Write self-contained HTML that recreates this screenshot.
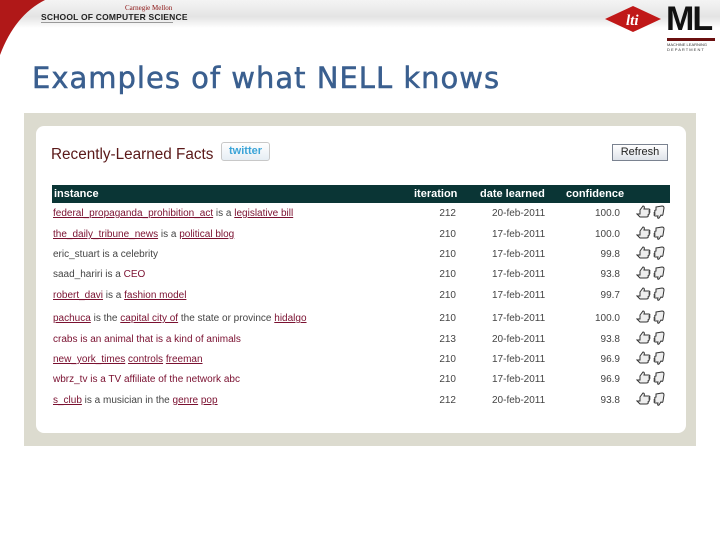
<!DOCTYPE html>
<html><head><meta charset="utf-8"><style>
*{margin:0;padding:0;box-sizing:border-box}
body{width:720px;height:540px;background:#fff;position:relative;overflow:hidden;font-family:"Liberation Sans",sans-serif}
.a{position:absolute}
.hdr{left:0;top:0;width:720px;height:28px;background:linear-gradient(180deg,#f4f4f4,#e4e4e4 60%,#fff)}
.title{left:32px;top:61px;font-family:"DejaVu Sans",sans-serif;font-size:29px;color:#3a5f8f;letter-spacing:1px;-webkit-text-stroke:0.5px #3a5f8f}
.outer{left:24px;top:113px;width:672px;height:333px;background:#dcdbcf}
.inner{left:36px;top:126px;width:650px;height:307px;background:#fff;border-radius:8px}
.h1{left:51px;top:146px;font-size:15.3px;color:#5a1818}
.tw{left:221px;top:142px;width:49px;height:19px;border:1px solid #c8c8c8;border-radius:3px;background:linear-gradient(#fff,#e6eef4);color:#3aa4d8;font-weight:bold;font-size:11px;text-align:center;line-height:17px}
.rf{left:612px;top:144px;width:56px;height:17px;border:1px solid #7a8290;background:linear-gradient(#fff,#dfe3ea);font-size:11px;text-align:center;line-height:15px;color:#222}
.th{left:52px;top:185px;width:618px;height:18px;background:#0a3535;color:#fff;font-size:11px;font-weight:bold}
.th span{position:absolute;top:3px}
.row{left:52px;width:618px;height:14px;font-size:10px;color:#444}
.row span{position:absolute;top:0}
a{color:#7a1030;text-decoration:underline}
.k{color:#7a1030}
.ic{left:584px!important;top:-3px!important}
</style></head><body>
<div class="a hdr"></div>
<svg width="0" height="0" style="position:absolute"><defs>
<g id="ic"><path d="M1,9 h3 v-4 l3,-4 q2,0 1,3 h5 q2,1 0,2 q2,1 0,2 q1,1 -1,2 q1,2 -2,2 h-6 z" fill="#eee" stroke="#333" stroke-width="1"/><path d="M20,2 l6,-1 q2,0 2,2 l-1,6 q0,2 -2,1 l-2,3 q-2,1 -1,-2 l-3,0 q-2,-1 0,-2 q-2,-1 0,-2 q-1,-2 1,-2 z" fill="#eee" stroke="#333" stroke-width="1"/></g>
</defs></svg>
<svg class="a" style="left:0;top:0" width="60" height="60"><path d="M0,0 H45 Q15,15 0,55 Z" fill="#b01818"/></svg>
<div class="a" style="left:125px;top:4px;font-family:'Liberation Serif',serif;font-size:7px;color:#8a1010">Carnegie Mellon</div>
<div class="a" style="left:41px;top:12px;font-size:8.5px;font-weight:bold;color:#222;letter-spacing:.2px">SCHOOL OF COMPUTER SCIENCE</div>
<div class="a" style="left:41px;top:22px;width:132px;height:1px;background:#999"></div>
<svg class="a" style="left:603px;top:4px" width="60" height="30"><path d="M2,15 L30,2 L58,15 L30,28 Z" fill="#c01818"/><text x="23" y="21" font-family="Liberation Serif" font-style="italic" font-weight="bold" font-size="15" fill="#fff">lti</text></svg>
<div class="a" style="left:666px;top:0;font-size:34px;font-weight:bold;color:#111;letter-spacing:-2px;line-height:38px">ML</div>
<div class="a" style="left:667px;top:38px;width:48px;height:3px;background:#6a1010"></div>
<div class="a" style="left:667px;top:42px;font-size:4px;color:#333;line-height:5px">MACHINE LEARNING<br>D E P A R T M E N T</div>
<div class="a title">Examples of what NELL knows</div>
<div class="a outer"></div>
<div class="a inner"></div>
<div class="a h1">Recently-Learned Facts</div>
<div class="a tw">twitter</div>
<div class="a rf">Refresh</div>
<div class="a th"><span style="left:2px">instance</span><span style="left:362px">iteration</span><span style="left:428px">date learned</span><span style="left:514px">confidence</span></div>
<div class="a row" style="top:208px"><span style="left:1px"><a>federal_propaganda_prohibition_act</a> is a <a>legislative bill</a></span><span style="right:214px">212</span><span style="left:440px">20-feb-2011</span><span style="right:50px">100.0</span><svg class="a ic" width="32" height="16"><use href="#ic"/></svg></div>
<div class="a row" style="top:229px"><span style="left:1px"><a>the_daily_tribune_news</a> is a <a>political blog</a></span><span style="right:214px">210</span><span style="left:440px">17-feb-2011</span><span style="right:50px">100.0</span><svg class="a ic" width="32" height="16"><use href="#ic"/></svg></div>
<div class="a row" style="top:249px"><span style="left:1px">eric_stuart is a celebrity</span><span style="right:214px">210</span><span style="left:440px">17-feb-2011</span><span style="right:50px">99.8</span><svg class="a ic" width="32" height="16"><use href="#ic"/></svg></div>
<div class="a row" style="top:269px"><span style="left:1px">saad_hariri is a <span class="k" style="position:static">CEO</span></span><span style="right:214px">210</span><span style="left:440px">17-feb-2011</span><span style="right:50px">93.8</span><svg class="a ic" width="32" height="16"><use href="#ic"/></svg></div>
<div class="a row" style="top:290px"><span style="left:1px"><a>robert_davi</a> is a <a>fashion model</a></span><span style="right:214px">210</span><span style="left:440px">17-feb-2011</span><span style="right:50px">99.7</span><svg class="a ic" width="32" height="16"><use href="#ic"/></svg></div>
<div class="a row" style="top:313px"><span style="left:1px"><a>pachuca</a> is the <a>capital city of</a> the state or province <a>hidalgo</a></span><span style="right:214px">210</span><span style="left:440px">17-feb-2011</span><span style="right:50px">100.0</span><svg class="a ic" width="32" height="16"><use href="#ic"/></svg></div>
<div class="a row" style="top:334px"><span style="left:1px" class="k">crabs is an animal that is a kind of animals</span><span style="right:214px">213</span><span style="left:440px">20-feb-2011</span><span style="right:50px">93.8</span><svg class="a ic" width="32" height="16"><use href="#ic"/></svg></div>
<div class="a row" style="top:354px"><span style="left:1px"><a>new_york_times</a> <a>controls</a> <a>freeman</a></span><span style="right:214px">210</span><span style="left:440px">17-feb-2011</span><span style="right:50px">96.9</span><svg class="a ic" width="32" height="16"><use href="#ic"/></svg></div>
<div class="a row" style="top:374px"><span style="left:1px" class="k">wbrz_tv is a TV affiliate of the network abc</span><span style="right:214px">210</span><span style="left:440px">17-feb-2011</span><span style="right:50px">96.9</span><svg class="a ic" width="32" height="16"><use href="#ic"/></svg></div>
<div class="a row" style="top:395px"><span style="left:1px"><a>s_club</a> is a musician in the <a>genre</a> <a>pop</a></span><span style="right:214px">212</span><span style="left:440px">20-feb-2011</span><span style="right:50px">93.8</span><svg class="a ic" width="32" height="16"><use href="#ic"/></svg></div>
</body></html>
